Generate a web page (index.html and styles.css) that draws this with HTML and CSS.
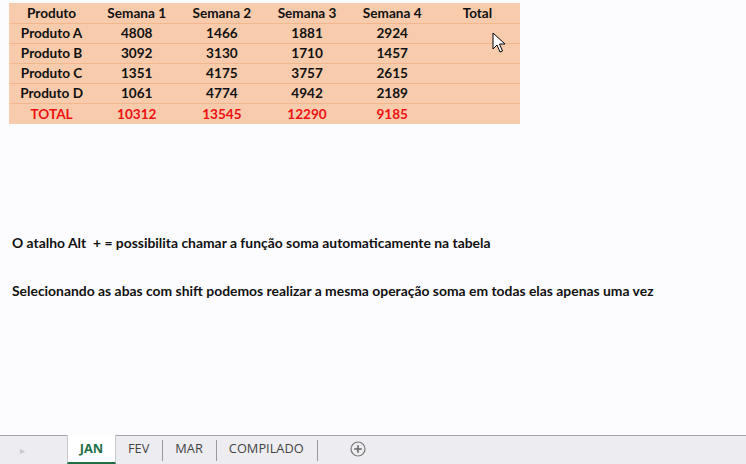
FILE: index.html
```html
<!DOCTYPE html>
<html lang="pt">
<head>
<meta charset="utf-8">
<link rel="stylesheet" href="styles.css">
</head>
<body>
<div class="sheet">
  <div class="grid-area">
    <table class="data">
      <tr class="head"><td>Produto</td><td>Semana 1</td><td>Semana 2</td><td>Semana 3</td><td>Semana 4</td><td>Total</td></tr>
      <tr><td>Produto A</td><td>4808</td><td>1466</td><td>1881</td><td>2924</td><td></td></tr>
      <tr><td>Produto B</td><td>3092</td><td>3130</td><td>1710</td><td>1457</td><td></td></tr>
      <tr><td>Produto C</td><td>1351</td><td>4175</td><td>3757</td><td>2615</td><td></td></tr>
      <tr><td>Produto D</td><td>1061</td><td>4774</td><td>4942</td><td>2189</td><td></td></tr>
      <tr class="total"><td>TOTAL</td><td>10312</td><td>13545</td><td>12290</td><td>9185</td><td></td></tr>
    </table>
    <p class="note first">O atalho Alt&nbsp; + = possibilita chamar a função soma automaticamente na tabela</p>
    <p class="note second">Selecionando as abas com shift podemos realizar a mesma operação soma em todas elas apenas uma vez</p>
    <svg class="cursor" width="14" height="22" viewBox="0 0 14 22">
      <path d="M1 1 L1 17 L5 13 L8 20 L10.5 19 L7.5 12 L13 12 Z" fill="#fff" stroke="#000" stroke-width="1" stroke-linejoin="miter"/>
    </svg>
  </div>
  <div class="tabbar">
    <span class="nav">&#9656;</span>
    <span class="tab active">JAN</span>
    <span class="tab">FEV</span>
    <span class="sep"></span>
    <span class="tab">MAR</span>
    <span class="sep"></span>
    <span class="tab">COMPILADO</span>
    <span class="sep"></span>
    <span class="add">
      <svg width="16" height="16" viewBox="0 0 16 16">
        <circle cx="8" cy="8" r="7" fill="none" stroke="#777" stroke-width="1.2"/>
        <path d="M8 4.2 V11.8 M4.2 8 H11.8" stroke="#666" stroke-width="1.6"/>
      </svg>
    </span>
  </div>
</div>
</body>
</html>
```
FILE: styles.css
```css
html, body {
  margin: 0;
  padding: 0;
  background: #fcfcfe;
}
.sheet {
  width: 746px;
  height: 464px;
  display: flex;
  flex-direction: column;
  font-family: Lato, "Liberation Sans", sans-serif;
}
.grid-area {
  position: relative;
  flex: 1;
  padding: 3px 0 0 9px;
}
.data {
  border-collapse: collapse;
  background: #f8cbad;
  table-layout: fixed;
  width: 511px;
}
.data td {
  width: 85px;
  height: 19px;
  padding: 0;
  text-align: center;
  font-weight: bold;
  font-size: 13.6px;
  color: #111;
  border-top: 1px solid #f1b88f;
  line-height: 19px;
}
.data tr.head td {
  border-top: none;
  height: 20px;
}
.data tr.total td {
  color: #ee1111;
  height: 20px;
}
.note {
  margin: 0;
  padding-left: 3px;
  font-weight: bold;
  font-size: 13.9px;
  color: #111;
  line-height: 18px;
}
.note.first {
  margin-top: 110px;
}
.note.second {
  margin-top: 30px;
}
.cursor {
  position: absolute;
  left: 492px;
  top: 32px;
}
.tabbar {
  height: 28px;
  border-top: 1px solid #a4a4ac;
  background: #ededf1;
  display: flex;
  align-items: center;
  font-family: "Open Sans", "Noto Sans", sans-serif;
  font-size: 12.8px;
  color: #444;
}
.nav {
  width: 67px;
  padding-left: 20px;
  box-sizing: border-box;
  color: #c8c8cc;
  font-size: 10px;
}
.tab {
  padding: 0 13px 0 12px;
  height: 28px;
  line-height: 25px;
}
.tab.active {
  background: #fff;
  color: #1e7048;
  font-weight: bold;
  width: 49px;
  box-sizing: border-box;
  text-align: center;
  padding: 0;
  margin-top: -1px;
  height: 29px;
  border-bottom: 2px solid #1e7048;
  line-height: 27px;
  border-left: 1px solid #c9c9cf;
  border-right: 1px solid #c9c9cf;
}
.sep {
  width: 1px;
  height: 21px;
  background: #9a9aa0;
}
.add {
  margin-left: 32px;
  display: flex;
  margin-bottom: 3px;
}
```
